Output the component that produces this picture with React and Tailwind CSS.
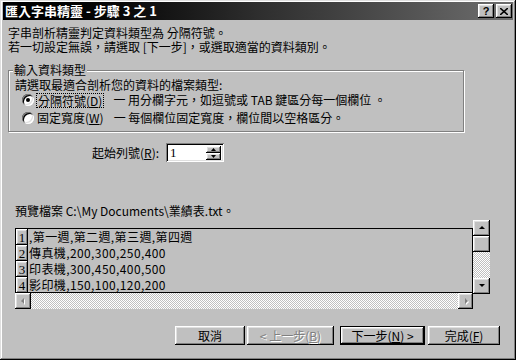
import React from "react";

// win95 bevels
const raised =
  "bg-[#c0c0c0] shadow-[inset_-1px_-1px_0_#000,inset_1px_1px_0_#fff,inset_-2px_-2px_0_#808080,inset_2px_2px_0_#dfdfdf]";
const sunken =
  "bg-white shadow-[inset_1px_1px_0_#808080,inset_-1px_-1px_0_#fff,inset_2px_2px_0_#000,inset_-2px_-2px_0_#dfdfdf]";
const dither =
  "bg-[repeating-conic-gradient(#fff_0_25%,#c0c0c0_0_50%)] bg-[length:2px_2px]";

const rows = [
  ",第一週,第二週,第三週,第四週",
  "傳真機,200,300,250,400",
  "印表機,300,450,400,500",
  "影印機,150,100,120,200",
];

function Arrow({ dir, gray }) {
  const color = gray ? "#808080" : "#000";
  const pts = {
    up: "1,5 4,2 7,5",
    down: "1,2 4,5 7,2",
    left: "5,1 2,4 5,7",
    right: "3,1 6,4 3,7",
  }[dir];
  return (
    <svg width="8" height="8" viewBox="0 0 8 8">
      {gray && (
        <polygon points={pts} fill="#fff" transform="translate(1,1)" />
      )}
      <polygon points={pts} fill={color} />
    </svg>
  );
}

function Radio({ checked }) {
  return (
    <span className="relative w-[12px] h-[12px] rounded-full bg-white shadow-[inset_1px_1px_0_#808080,inset_-1px_-1px_0_#fff,inset_2px_2px_0_#000,inset_-2px_-2px_0_#dfdfdf] flex items-center justify-center shrink-0">
      {checked && <span className="w-[4px] h-[4px] rounded-full bg-black" />}
    </span>
  );
}

function Btn({ children, w, className = "", disabled, def }) {
  return (
    <div
      className={`h-[19px] flex items-center justify-center ${w} ${className} ${
        def ? "border border-black" : ""
      }`}
    >
      <div
        className={`w-full h-full flex items-center justify-center ${raised} ${
          disabled ? "text-[#808080] [text-shadow:1px_1px_0_#fff]" : ""
        }`}
      >
        {children}
      </div>
    </div>
  );
}

export default function App() {
  return (
    <div className="w-[516px] h-[360px] bg-[#c0c0c0] text-black text-[12px] leading-[14px] font-['Noto_Sans_CJK_TC',sans-serif] shadow-[inset_-1px_-1px_0_#000,inset_1px_1px_0_#dfdfdf,inset_-2px_-2px_0_#808080,inset_2px_2px_0_#fff] pt-[2px] px-[3px] overflow-hidden">
      {/* title bar */}
      <div className="h-[18px] flex items-center pl-[2px] pr-[1px] bg-gradient-to-r from-black via-[#2e2e2e] to-[#6e6e6e]">
        <span className="text-white font-bold text-[13px] leading-[16px]">
          匯入字串精靈 - 步驟 3 之 1
        </span>
        <div className="ml-auto flex gap-[2px]">
          <div className={`w-[16px] h-[14px] flex items-center justify-center font-bold text-[11px] leading-none font-['Liberation_Sans',sans-serif] ${raised}`}>
            ?
          </div>
          <div className={`w-[16px] h-[14px] flex items-center justify-center ${raised}`}>
            <svg width="8" height="7" viewBox="0 0 8 7">
              <path d="M0 0 L8 7 M8 0 L0 7" stroke="#000" strokeWidth="1.6" />
            </svg>
          </div>
        </div>
      </div>

      <div className="px-[5px]">
        <div className="mt-[6px]">字串剖析精靈判定資料類型為 分隔符號。</div>
        <div>若一切設定無誤，請選取 [下一步]，或選取適當的資料類別。</div>

        {/* group box */}
        <div className="relative mt-[16px] w-[456px] h-[62px] border border-[#808080] shadow-[inset_1px_1px_0_#fff,1px_1px_0_#fff]">
          <span className="absolute -top-[8px] left-[4px] px-[1px] bg-[#c0c0c0]">
            輸入資料類型
          </span>
          <div className="pt-[7px] pl-[6px]">請選取最適合剖析您的資料的檔案類型:</div>
          <div className="mt-[1px] pl-[13px] flex items-center h-[14px]">
            <Radio checked />
            <span className="ml-[2px] px-[1px] border border-dotted border-black leading-[13px]">
              分隔符號(<u>D</u>)
            </span>
            <span className="ml-[9px]">一 用分欄字元，如逗號或 TAB 鍵區分每一個欄位 。</span>
          </div>
          <div className="mt-[4px] pl-[13px] flex items-center h-[14px]">
            <Radio />
            <span className="ml-[3px]">固定寬度(<u>W</u>)</span>
            <span className="ml-[10px]">一 每個欄位固定寬度，欄位間以空格區分。</span>
          </div>
        </div>

        {/* start row */}
        <div className="mt-[11px] h-[19px] flex items-center">
          <span className="ml-[84px]">起始列號(<u>R</u>):</span>
          <div className={`ml-[7px] w-[58px] h-[19px] flex items-center pl-[4px] pr-[3px] ${sunken}`}>
            <span className="font-['Liberation_Serif',serif] text-[13px]">1</span>
            <div className="ml-auto flex flex-col">
              <div className={`w-[15px] h-[7px] flex items-center justify-center ${raised}`}>
                <svg width="5" height="3" viewBox="0 0 5 3"><polygon points="0,3 2.5,0 5,3" fill="#000" /></svg>
              </div>
              <div className={`w-[15px] h-[7px] flex items-center justify-center ${raised}`}>
                <svg width="5" height="3" viewBox="0 0 5 3"><polygon points="0,0 2.5,3 5,0" fill="#000" /></svg>
              </div>
            </div>
          </div>
        </div>

        <div className="mt-[42px] pl-[7px]">預覽檔案 C:\My Documents\業績表.txt。</div>

        {/* preview */}
        <div className="mt-[2px] ml-[7px] flex items-start">
          <div className="w-[458px] mt-[8px]">
            <div className="h-[65px] border border-black overflow-hidden">
              {rows.map((r, i) => (
                <div key={i} className="h-[16px] flex items-stretch">
                  <div className={`w-[12px] shrink-0 flex items-end justify-center font-['Liberation_Serif',serif] text-[13px] leading-[14px] ${raised}`}>
                    {i + 1}
                  </div>
                  <div className="pl-[1px] leading-[16px] whitespace-nowrap tracking-[0.4px]">{r}</div>
                </div>
              ))}
            </div>
            <div className={`h-[16px] flex ${dither}`}>
              <div className={`w-[16px] h-[16px] flex items-center justify-center ${raised}`}>
                <Arrow dir="left" gray />
              </div>
              <div className={`ml-auto w-[15px] h-[16px] flex items-center justify-center ${raised}`}>
                <Arrow dir="right" gray />
              </div>
            </div>
          </div>
          <div className={`w-[17px] h-[74px] flex flex-col ${dither}`}>
            <div className={`h-[16px] flex items-center justify-center ${raised}`}>
              <Arrow dir="up" />
            </div>
            <div className={`h-[16px] ${raised}`} />
            <div className={`mt-auto h-[16px] flex items-center justify-center ${raised}`}>
              <Arrow dir="down" />
            </div>
          </div>
        </div>

        {/* buttons */}
        <div className="mt-[17px] flex ml-[167px]">
          <Btn w="w-[70px]">取消</Btn>
          <Btn w="w-[87px]" className="ml-[2px]" disabled>
            &lt; 上一步(<u>B</u>)
          </Btn>
          <Btn w="w-[85px]" className="ml-[6px]" def>
            下一步(<u>N</u>) &gt;
          </Btn>
          <Btn w="w-[72px]" className="ml-[3px]">
            完成(<u>F</u>)
          </Btn>
        </div>
      </div>
    </div>
  );
}
